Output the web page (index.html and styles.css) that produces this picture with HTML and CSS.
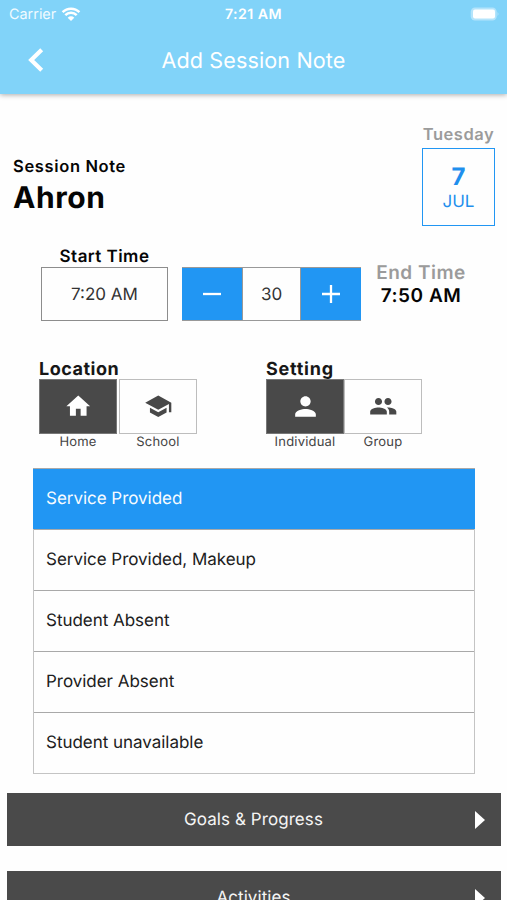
FILE: index.html
```html
<!DOCTYPE html>
<html lang="en">
<head>
<meta charset="utf-8">
<title>Add Session Note</title>
<link rel="stylesheet" href="styles.css">
</head>
<body>
<header class="header">
  <div class="status">
    <div class="status-left"><span class="carrier">Carrier</span>
      <svg class="wifi" viewBox="0 0 18 14"><path d="M9 14 5.7 10.7a4.7 4.7 0 0 1 6.6 0Z" fill="#fff"/><path d="M3.3 8.2a8 8 0 0 1 11.4 0M.6 5.1a11.9 11.9 0 0 1 16.8 0" fill="none" stroke="#fff" stroke-width="2.5"/></svg>
    </div>
    <span class="clock">7:21 AM</span>
    <svg class="battery" viewBox="0 0 30 14"><rect x=".7" y=".5" width="26" height="13" rx="4.3" fill="#b4e4fb"/><path d="M27.5 5v4q2-2 0-4Z" fill="#b4e4fb"/><rect x="3" y="2.6" width="22" height="9" rx="2" fill="#fff"/></svg>
  </div>
  <div class="nav">
    <svg class="back" viewBox="0 0 18 26"><path d="M14.7 2.8 4.2 13l10.5 10.2" fill="none" stroke="#fff" stroke-width="4.2"/></svg>
    <h1 class="title">Add Session Note</h1>
  </div>
</header>
<main>
  <section class="intro">
    <div class="who">
      <div class="kicker"><span>Session Note</span></div>
      <div class="name"><span>Ahron</span></div>
    </div>
    <div class="date">
      <div class="weekday"><span>Tuesday</span></div>
      <div class="date-box"><div class="day">7</div><div class="month">JUL</div></div>
    </div>
  </section>
  <section class="times">
    <div class="start">
      <div class="start-label"><span>Start Time</span></div>
      <div class="start-box"><span>7:20 AM</span></div>
    </div>
    <div class="stepper">
      <div class="step"><svg viewBox="0 0 18 18"><path d="M0 9h18" stroke="#fff" stroke-width="2.3"/></svg></div>
      <div class="minutes">30</div>
      <div class="step"><svg viewBox="0 0 18 18"><path d="M0 9h18M9 0v18" stroke="#fff" stroke-width="2.3"/></svg></div>
    </div>
    <div class="end">
      <div class="end-label"><span>End Time</span></div>
      <div class="end-time"><span>7:50 AM</span></div>
    </div>
  </section>
  <section class="choices">
    <div class="group">
      <div class="group-label"><span class="location">Location</span></div>
      <div class="options spaced">
        <div class="option"><div class="tile on"><svg viewBox="0 0 24 24"><path d="M10 20v-6h4v6h5v-8h3L12 3 2 12h3v8z"/></svg></div><div class="caption">Home</div></div>
        <div class="option"><div class="tile"><svg viewBox="0 0 24 24"><path d="M5 13.18v4L12 21l7-3.82v-4L12 17l-7-3.82zM12 3 1 9l11 6 9-4.91V17h2V9L12 3z"/></svg></div><div class="caption">School</div></div>
      </div>
    </div>
    <div class="group">
      <div class="group-label"><span class="setting">Setting</span></div>
      <div class="options">
        <div class="option"><div class="tile on"><svg class="person" viewBox="0 0 24 24"><path d="M12 12c2.21 0 4-1.79 4-4s-1.79-4-4-4-4 1.79-4 4 1.79 4 4 4zm0 2c-2.67 0-8 1.34-8 4v2h16v-2c0-2.66-5.33-4-8-4z"/></svg></div><div class="caption">Individual</div></div>
        <div class="option"><div class="tile"><svg viewBox="0 0 24 24"><path d="M16 11c1.66 0 2.99-1.34 2.99-3S17.66 5 16 5s-3 1.34-3 3 1.34 3 3 3zm-8 0c1.66 0 2.99-1.34 2.99-3S9.66 5 8 5 5 6.34 5 8s1.34 3 3 3zm0 2c-2.33 0-7 1.17-7 3.5V19h14v-2.5c0-2.33-4.67-3.5-7-3.5zm8 0c-.29 0-.62.02-.97.05 1.16.84 1.97 1.97 1.97 3.45V19h6v-2.5c0-2.33-4.67-3.5-7-3.5z"/></svg></div><div class="caption">Group</div></div>
      </div>
    </div>
  </section>
  <ul class="services">
    <li class="selected">Service Provided</li>
    <li>Service Provided, Makeup</li>
    <li>Student Absent</li>
    <li>Provider Absent</li>
    <li>Student unavailable</li>
  </ul>
  <div class="bar"><span>Goals &amp; Progress</span><svg class="arrow" viewBox="0 0 10 18"><path d="M0 0 10 9 0 18z" fill="#fff"/></svg></div>
  <div class="bar"><span>Activities</span><svg class="arrow" viewBox="0 0 10 18"><path d="M0 0 10 9 0 18z" fill="#fff"/></svg></div>
</main>
</body>
</html>
```
FILE: styles.css
```css
* { box-sizing: border-box; }
html, body { margin: 0; height: 900px; overflow: hidden; }
body { background: #fefefe; color: #050505; font-family: Inter, "Liberation Sans", sans-serif; white-space: nowrap; text-rendering: geometricPrecision; }
svg { display: block; flex: none; overflow: visible; }

.header { height: 94px; background: #81d3f9; color: #fff; box-shadow: 0 1px 5px rgba(0, 0, 0, .33); }
.status { display: grid; grid-template-columns: 1fr auto 1fr; align-items: center; height: 28px; padding: 0 6px 0 9px; }
.status-left { display: flex; align-items: center; gap: 6px; }
.carrier { font-size: 14.4px; line-height: 28px; padding-top: 1px; color: #f1fbff; }
.wifi { width: 18px; height: 14px; margin: -2px 0 0; }
.clock { font-size: 14.2px; font-weight: 600; letter-spacing: .45px; line-height: 26px; margin: 1px 3px 0 0; }
.battery { width: 30px; height: 14px; justify-self: end; margin: -2px 1px 0 0; }
.nav { display: grid; grid-template-columns: 60px 1fr 60px; align-items: center; height: 64px; }
.back { width: 18px; height: 26px; margin-left: 27px; }
.title { margin: 2px 0 0; text-align: center; font-size: 21.6px; font-weight: 400; letter-spacing: .1px; line-height: 62px; }

.intro { display: flex; justify-content: space-between; height: 132px; padding: 29px 12px 0 13px; }
.who { padding-top: 33px; }
.kicker { font-size: 16.5px; font-weight: 600; line-height: 21px; letter-spacing: .65px; }
.name { font-size: 30px; font-weight: 700; line-height: 42px; letter-spacing: .6px; }
.date { width: 73px; text-align: center; }
.weekday { color: #9b9b9b; font-size: 16.5px; font-weight: 600; line-height: 22px; letter-spacing: .55px; }
.date-box { height: 78px; margin-top: 3px; padding-top: 13px; border: 1.5px solid #2196f3; color: #1f8fed; }
.day { font-size: 24px; font-weight: 700; line-height: 30px; }
.month { font-size: 17px; line-height: 21px; }

.times { display: flex; height: 117px; padding: 20px 0 0 41px; }
.start { width: 127px; text-align: center; }
.start-label { font-size: 17px; font-weight: 600; line-height: 20px; padding-top: 1px; letter-spacing: .45px; }
.start-box { height: 54px; border: 1px solid #8d8d8d; color: #333; font-size: 17px; line-height: 54px; }
.stepper { display: grid; grid-template-columns: 60px 59px 60px; width: 179px; height: 54px; margin: 21px 0 0 14px; border: solid #999; border-width: 1px 0; }
.step { display: flex; align-items: center; justify-content: center; background: #2196f3; }
.step svg { width: 18px; height: 18px; }
.minutes { height: 52px; border: solid #999; border-width: 0 1px; color: #333; font-size: 17px; line-height: 54px; text-align: center; }
.end { width: 90px; margin: 15px 0 0 15px; text-align: center; }
.end-label { color: #9b9b9b; font-size: 19px; font-weight: 600; line-height: 23px; letter-spacing: .5px; }
.end-time { font-size: 19px; font-weight: 600; line-height: 23px; letter-spacing: .5px; }

.choices { display: flex; gap: 69px; height: 108px; padding: 17px 0 0 39px; }
.group-label { font-size: 18px; font-weight: 650; line-height: 20px; height: 19px; letter-spacing: .5px; color: #171717; }
.setting { letter-spacing: .75px; }
.options { display: flex; }
.spaced { gap: 2px; }
.option { width: 78px; text-align: center; }
.tile { display: flex; align-items: center; justify-content: center; height: 55px; border: 1px solid #bdbdbd; fill: #484848; }
.tile svg { width: 28.5px; height: 28.5px; }
.tile .person { width: 31px; height: 31px; }
.tile.on { background: #494949; border-color: #777; fill: #fff; }
.caption { font-size: 13px; line-height: 17px; letter-spacing: .2px; color: #444; }

.services { list-style: none; width: 442px; margin: 17px 0 0 33px; padding: 0; border: 1px solid #c4c4c4; border-width: 0 1px 1px; color: #202020; }
.services li { height: 61px; padding-left: 12px; border-top: 1px solid #a9a9a9; font-size: 17px; line-height: 61px; letter-spacing: -.03px; }
.services .selected { background: #2196f3; color: #f6fbff; margin: 0 -1px; padding-left: 13px; }

.bar { display: grid; grid-template: 53px / 40px 1fr 10px; align-items: center; height: 53px; margin: 19px 6px 25px 7px; padding-right: 16px; background: #4a4a4a; color: #f5f5f5; font-size: 17px; text-align: center; letter-spacing: .07px; }
.bar + .bar { margin-top: 0; }
.bar span { grid-column: 2; height: 53px; padding-right: 15px; line-height: 54px; }
.arrow { width: 10px; height: 18px; }
```
